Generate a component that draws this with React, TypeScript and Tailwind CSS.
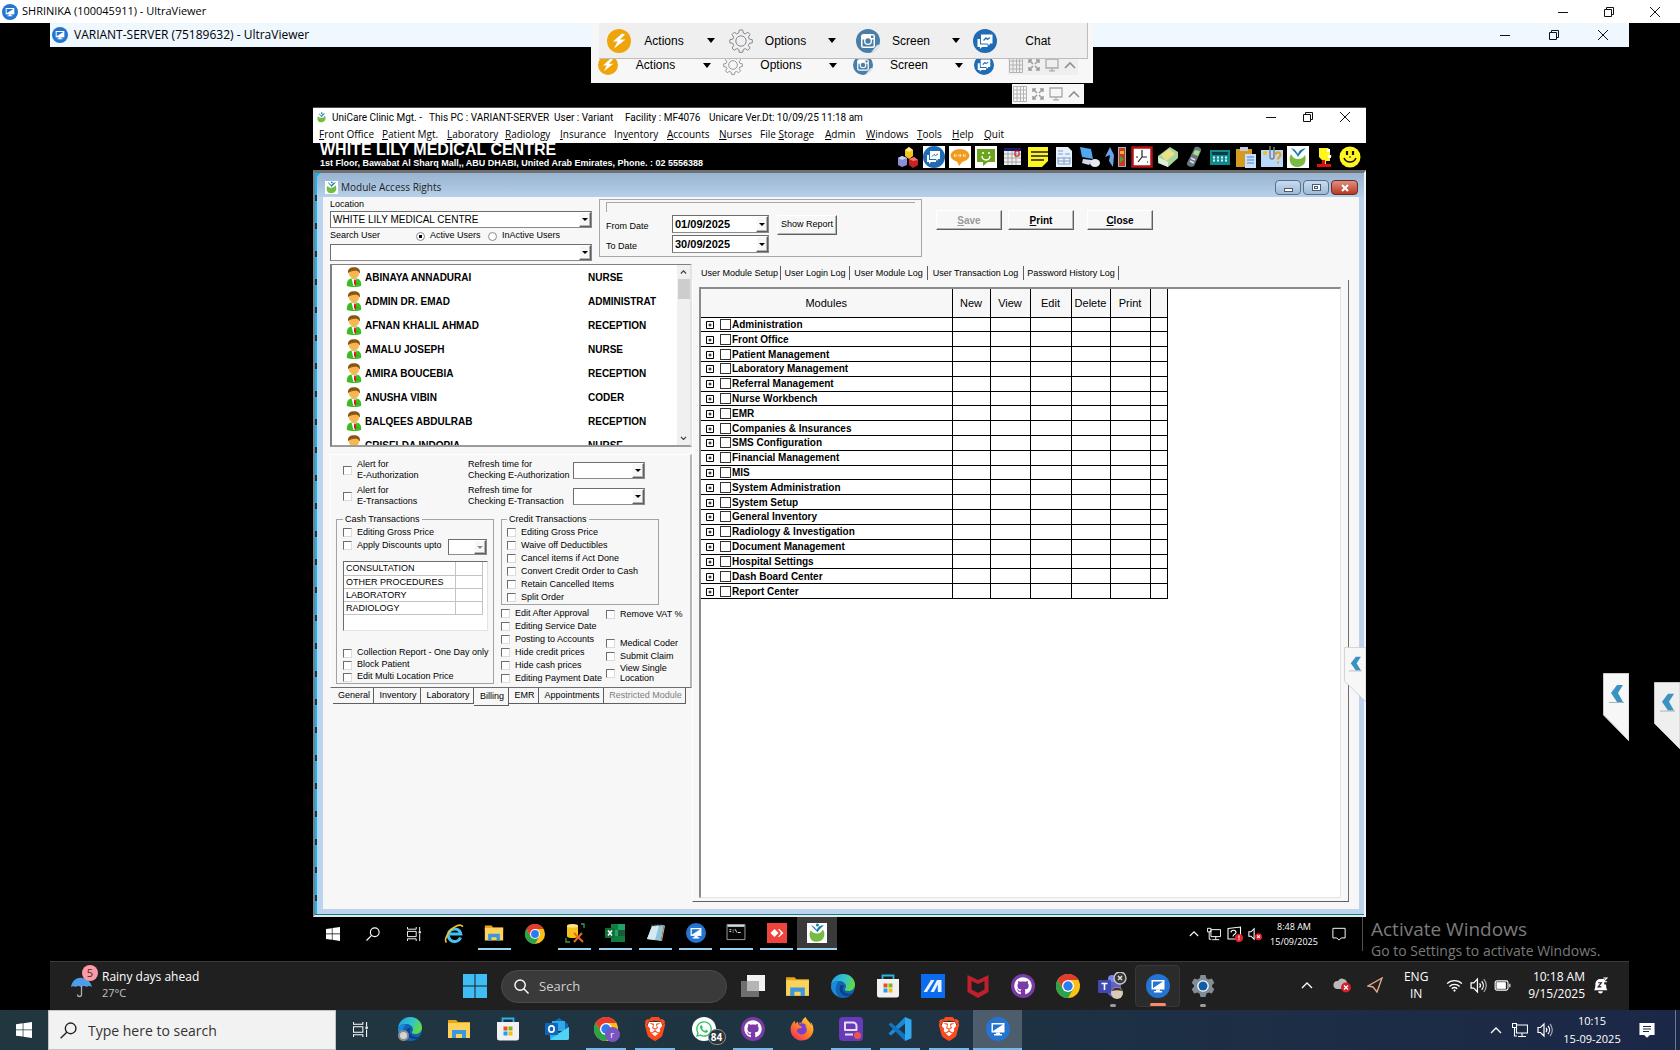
import React from "react";
import { FaGithub, FaWhatsapp, FaFirefoxBrowser } from "react-icons/fa";
import { SiBrave } from "react-icons/si";

/* ---------- fonts and shared class strings ---------- */

const SEGOE = "font-['Open_Sans','Noto_Sans',sans-serif]";
const ARIAL = "font-['Liberation_Sans',Arial,sans-serif]";

type IconProps = { className?: string };

/* ---------- brand and system icons ---------- */

const UltraIcon = ({ className = "size-6" }: IconProps) => (
  <svg viewBox="0 0 24 24" className={className} aria-hidden="true">
    <circle cx="12" cy="12" r="12" fill="#2474d2" />
    <path d="M5.500 6h13v9.500h-13z" fill="#fff" />
    <path d="M7 7.400h10L7 14z" fill="#2474d2" />
    <path d="M10 15.500h4v1.600h2v1.400H8v-1.400h2z" fill="#fff" />
  </svg>
);

const LeafIcon = ({ className = "size-4" }: IconProps) => (
  <svg viewBox="0 0 24 24" className={className} aria-hidden="true">
    <path d="M0 0h24v24H0z" fill="#fff" />
    <path d="M4.500 9C1.500 13 3 22.500 11 22.500c8 0 11-6 9.500-12-.5-1.500-1-2-1.500-2.500-2 3.500-4 4.500-7 4.500-3 0-5.500-1-7.500-3.500z" fill="#78bb43" />
    <path d="M5 2.500C8 4 9.500 5.500 11.500 8 13.500 4.500 16 3 20 2.500c-1.500 2.500-4.500 4-7.500 8.500C10 8 7 6 5 2.500z" fill="#157fa6" />
    <circle cx="12.500" cy="2.500" r="1.800" fill="#157fa6" />
  </svg>
);

const BoltIcon = ({ className = "size-6" }: IconProps) => (
  <svg viewBox="0 0 24 24" className={className} aria-hidden="true">
    <circle cx="12" cy="12" r="12" fill="#eea50b" />
    <path d="M15 4.500L6 12.500h4.500L7 19.500l11.500-9h-5.500L18 5.500z" fill="#fff" />
  </svg>
);

const GearOutline = ({ className = "size-6" }: IconProps) => (
  <svg viewBox="0 0 24 24" className={className} fill="none" stroke="#85878f" strokeWidth="1" aria-hidden="true">
    <path d="M10.300 1h3.400l.6 3 2 .9 2.600-1.700 2.200 2.300-1.700 2.500.9 2.100 3 .6v3.100l-3 .6-.9 2.100 1.700 2.500-2.300 2.300-2.500-1.700-2 .9-.6 2.800h-3.400l-.6-2.900-2-.8-2.600 1.700L3 19l1.700-2.500-.9-2.100-3-.6v-3.100l3-.6.9-2.100L3 5.500l2.300-2.300 2.500 1.700 1.900-.9z" />
    <circle cx="12" cy="12" r="5.200" />
  </svg>
);

const CameraIcon = ({ className = "size-6" }: IconProps) => (
  <svg viewBox="0 0 24 24" className={className} aria-hidden="true">
    <circle cx="12" cy="12" r="12" fill="#4a7ea6" />
    <path d="M21 16l-6 7.500c4.500-1 7.500-4 8.500-8z" fill="#fff" opacity=".8" />
    <rect x="5" y="5" width="14" height="14" rx="2.500" fill="#fff" />
    <path d="M6.500 10.500h2a4 4 0 0 0 7 0h2v6a1 1 0 0 1-1 1h-9a1 1 0 0 1-1-1z" fill="#4a7ea6" />
    <circle cx="12" cy="12" r="4" fill="#fff" />
    <circle cx="12" cy="12" r="2.700" fill="#4a7ea6" />
    <path d="M15 6.500h2.500V9H15z" fill="#4a7ea6" />
  </svg>
);

const ChatIcon = ({ className = "size-6" }: IconProps) => (
  <svg viewBox="0 0 24 24" className={className} aria-hidden="true">
    <circle cx="12" cy="12" r="12" fill="#1f6cb5" />
    <path d="M8 5.500h11.500v9H17l-1 2-1.500-2H8z" fill="#fff" />
    <path d="M4.500 10H7v5.500h7.500v2.500H9l-2 2v-2H4.500z" fill="#fff" />
    <path d="M10.500 11.500l2.500-2.500 1.500 1.300L17 8.500" stroke="#1f6cb5" strokeWidth="1.300" fill="none" />
  </svg>
);

const WinLogo = ({ className = "size-4" }: IconProps) => (
  <svg viewBox="0 0 16 16" className={className} fill="#fff" aria-hidden="true">
    <path d="M0 2.200l6.700-.9v6.200H0zM7.400 1.200L16 0v7.500H7.400zM0 8.300h6.700v6.300L0 13.700zM7.400 8.300H16V16l-8.600-1.300z" />
  </svg>
);

const Lens = ({ className = "size-4", color = "#fff" }: IconProps & { color?: string }) => (
  <svg viewBox="0 0 16 16" className={className} fill="none" stroke={color} strokeWidth="1.300" aria-hidden="true">
    <circle cx="10" cy="6" r="5" />
    <path d="M6.400 9.600L.6 15.400" />
  </svg>
);

const TaskView = ({ className = "size-4" }: IconProps) => (
  <svg viewBox="0 0 16 16" className={className} fill="none" stroke="#fff" strokeWidth="1.100" aria-hidden="true">
    <path d="M.5 0v2.500h10V0M.5 16v-2.500h10V16M.5 5h10v6H.500z" />
    <path d="M14.500 0v4.500M14.500 8v8" />
    <path d="M13.300 4.800h2.500v2.500h-2.500z" fill="#fff" stroke="none" />
  </svg>
);

const ChromeIcon = ({ className = "size-6" }: IconProps) => (
  <svg viewBox="0 0 24 24" className={className} aria-hidden="true">
    <circle cx="12" cy="12" r="12" fill="#fbc116" />
    <path d="M1.600 6A12 12 0 0 1 22.400 6H12L7 14.900z" fill="#e33b2e" />
    <path d="M1.600 6A12 12 0 0 0 12 24l5.200-9L12 12 6.800 15z" fill="#2ba24c" />
    <circle cx="12" cy="12" r="6" fill="#fff" />
    <circle cx="12" cy="12" r="4.700" fill="#2a7cf0" />
  </svg>
);

const EdgeIcon = ({ className = "size-6" }: IconProps) => (
  <svg viewBox="0 0 24 24" className={className} aria-hidden="true">
    <defs>
      <linearGradient id="edgeTop" x1="0" y1="0" x2="1" y2="0.400">
        <stop offset="0" stopColor="#1f9fe0" />
        <stop offset="0.600" stopColor="#34c3c9" />
        <stop offset="1" stopColor="#5fd84a" />
      </linearGradient>
    </defs>
    <circle cx="12" cy="12" r="12" fill="#1164b4" />
    <path d="M.1 11C1 4 6.500 0 12 0c7 0 12 5 12 10.500 0 4-3 6.500-6.500 6.500-2.500 0-4-1-3.500-2 .8-1 1-1.700 1-2.700C15 9 11.500 7 8 7S1 8.500.1 11z" fill="url(#edgeTop)" />
    <path d="M9 12.500c-1.500 5 2 9.500 7.500 9.500 2 0 4-1 5.500-2.500-2.500 1-8 .5-9.500-2.500C11 15 11.500 13.500 13 12c-1-1.500-3.500-1-4 .5z" fill="#0b3f8a" />
    <path d="M0 12c1-4 5-5 8-4.500-4 3-4.500 10-.5 14.800C3 20.500 0 17 0 12z" fill="#1b8bd8" />
  </svg>
);

const FolderIcon = ({ className = "size-6" }: IconProps) => (
  <svg viewBox="0 0 24 24" className={className} aria-hidden="true">
    <path d="M1 3h8l2 2h12v4H1z" fill="#e8a514" />
    <path d="M1 6h22v15H1z" fill="#fbd35c" />
    <path d="M5 13h14v8h-4v-4H9v4H5z" fill="#3a96dd" />
  </svg>
);

const StoreIcon = ({ className = "size-6" }: IconProps) => (
  <svg viewBox="0 0 24 24" className={className} aria-hidden="true">
    <path d="M6.500 6V1.500h11V6" fill="none" stroke="#2bb3e6" strokeWidth="1.800" />
    <path d="M1 5h22v16a2.500 2.500 0 0 1-2.500 2.500h-17A2.500 2.500 0 0 1 1 21z" fill="#f1f1f1" />
    <path d="M7.500 9.500h4v4h-4z" fill="#e8502a" />
    <path d="M12.500 9.500h4v4h-4z" fill="#7db916" />
    <path d="M7.500 14.500h4v4h-4z" fill="#1fa2e6" />
    <path d="M12.500 14.500h4v4h-4z" fill="#fbb713" />
  </svg>
);

const BraveIcon = ({ className = "size-6" }: IconProps) => (
  <span className={"relative inline-flex " + className}>
    <svg viewBox="0 0 24 24" className="absolute inset-0 size-full" aria-hidden="true">
      <path d="M6 5h12l2 5-3 9-5 3-5-3-3-9z" fill="#fff" />
    </svg>
    <SiBrave className="relative size-full text-[#fb4a1c]" />
  </span>
);

const GithubIcon = () => (
  <span className="grid size-6 place-items-center rounded-full bg-[#7b3aa5]">
    <FaGithub className="size-[18px] text-white" />
  </span>
);

const WhatsappIcon = () => (
  <span className="relative grid size-6 place-items-center rounded-full bg-white">
    <FaWhatsapp className="size-[18px] text-[#28c15c]" />
    <span className={"absolute top-3 left-4 grid h-[16px] w-[18px] place-items-center rounded-full border border-[#8a9498] bg-[#2b3538] text-[10px] font-bold text-white " + SEGOE}>84</span>
  </span>
);

const FirefoxIcon = () => (
  <span className="relative grid size-6 place-items-center">
    <span className="absolute size-[14px] rounded-full bg-[#7a3fd0]" />
    <svg className="absolute size-0" aria-hidden="true">
      <defs>
        <linearGradient id="fox" x1="1" y1="0" x2="0.200" y2="1">
          <stop offset="0" stopColor="#ffe14a" />
          <stop offset="0.500" stopColor="#ff8a1f" />
          <stop offset="1" stopColor="#f2305a" />
        </linearGradient>
      </defs>
    </svg>
    <FaFirefoxBrowser className="relative size-6 fill-[url(#fox)]" />
  </span>
);

const OutlookIcon = () => (
  <svg viewBox="0 0 24 24" className="size-6" aria-hidden="true">
    <path d="M5 7l9-6 9 6v5H5z" fill="#1066b5" />
    <path d="M7 4h13v10H7z" fill="#32a9e7" />
    <path d="M5 10l9 6 10-6v11a2 2 0 0 1-2 2H7a2 2 0 0 1-2-2z" fill="#26b0ef" />
    <path d="M24 10L5 22.500A2 2 0 0 0 7 23h15a2 2 0 0 0 2-2z" fill="#50d3f7" />
    <rect x="0" y="6" width="13" height="12" rx="1" fill="#0f64c0" />
    <ellipse cx="6.500" cy="12" rx="2.700" ry="3.100" fill="none" stroke="#fff" strokeWidth="1.600" />
  </svg>
);

const VsCodeIcon = () => (
  <svg viewBox="0 0 24 24" className="size-6" aria-hidden="true">
    <path d="M17 0l6.500 2.800v18.400L17 24z" fill="#2fa8ef" />
    <path d="M17 0v6.500L3 18.500.5 16.500z" fill="#1a8ad6" />
    <path d="M17 24v-6.500L3 5.500.5 7.500z" fill="#0f75c0" />
  </svg>
);

const PurpleIcon = () => (
  <svg viewBox="0 0 24 24" className="size-6" aria-hidden="true">
    <rect width="24" height="24" rx="4" fill="#673ab7" />
    <path d="M6 5.500h8a3.500 3.500 0 0 1 3.500 3.500v4H6zM6 17.500h8" fill="none" stroke="#e6dcf5" strokeWidth="2" strokeLinejoin="round" />
    <circle cx="18.500" cy="18.500" r="3.500" fill="#f0524f" />
  </svg>
);

const IeIcon = () => (
  <svg viewBox="0 0 20 20" className="size-5" fill="none" aria-hidden="true">
    <path d="M16.500 13.500A6.300 6.300 0 1 1 16.800 10H6" stroke="#45c1f2" strokeWidth="3" />
    <path d="M2.500 18.500C-.5 16 5 5.500 11.500 2.500 15 .8 18.500.5 18.500 3" stroke="#f3c522" strokeWidth="1.600" />
  </svg>
);

const SqlIcon = () => (
  <svg viewBox="0 0 20 20" className="size-5" aria-hidden="true">
    <path d="M2 2.500C4 .5 11 .5 13 2.500v11c-2 2-9 2-11 0z" fill="#f6c11d" />
    <ellipse cx="7.500" cy="3" rx="5.500" ry="1.700" fill="#fde28a" />
    <path d="M16 1h3v4M1 15v4h4" stroke="#3c9a4a" strokeWidth="1.300" fill="none" />
    <path d="M9 10l9 9M17 10l-8 9" stroke="#e46a1c" strokeWidth="2" />
  </svg>
);

const ExcelIcon = () => (
  <svg viewBox="0 0 20 20" className="size-5" aria-hidden="true">
    <path d="M6 1h14v18H6z" fill="#21a366" />
    <path d="M6 1h7v6H6zM6 13h14v6H6z" fill="#107c41" />
    <path d="M13 7h7v6h-7z" fill="#185c37" />
    <rect y="5" width="10" height="10" rx="1" fill="#0f7038" />
    <path d="M3 7.500l4 5M7 7.500l-4 5" stroke="#fff" strokeWidth="1.500" />
  </svg>
);

const NotepadIcon = () => (
  <svg viewBox="0 0 20 20" className="size-5" aria-hidden="true">
    <path d="M6 3l12-1-3 16-14-2z" fill="#8fc3d6" />
    <path d="M6 3l7-.5-4 14.500-8-1z" fill="#d5eaf0" />
    <path d="M18 2l1 1-3 15-1 0z" fill="#d7a264" />
    <path d="M6 1.500v2M9 1.500v2M12 1v2M15 1v2" stroke="#67818b" strokeWidth=".8" />
  </svg>
);

const CmdIcon = () => (
  <svg viewBox="0 0 20 18" className="h-[17px] w-5" aria-hidden="true">
    <path d="M.5.500h19v16H.500z" fill="#060606" stroke="#9da2a6" />
    <path d="M1 1h18v2H1z" fill="#d9dcdf" />
    <path d="M3 6h2M3 8h2M7 6v1M7 8v1M9 5.500l2 3.500M12 9h3" stroke="#e8e8e8" strokeWidth="1" />
  </svg>
);

const AnyDeskIcon = () => (
  <svg viewBox="0 0 20 20" className="size-5" aria-hidden="true">
    <path d="M0 0h20v20H0z" fill="#ef443b" />
    <path d="M7.500 6l4 4-4 4-4-4zM11 6l1.200 0 4.300 4-4.300 4H11l3-4z" fill="#fff" />
  </svg>
);

const MIcon = () => (
  <svg viewBox="0 0 24 24" className="size-6" aria-hidden="true">
    <path d="M0 0h24v24H0z" fill="#0b6cf0" />
    <path d="M2.500 18L10 6h3.500L6 18zM9.500 18L16 6h4.500v12h-3.700v-7.500L13 18z" fill="#e8f2ff" />
  </svg>
);

const McAfeeIcon = () => (
  <svg viewBox="0 0 24 24" className="size-6" aria-hidden="true">
    <path d="M1.500 1L12 6l10.500-5v17L12 24 1.500 18zm4 6v8.500L12 19l6.500-3.500V7L12 10z" fill="#c01f2e" />
  </svg>
);

const TeamsIcon = () => (
  <svg viewBox="0 0 30 28" className="h-7 w-[30px]" aria-hidden="true">
    <circle cx="14" cy="7" r="4" fill="#7b83eb" />
    <path d="M8 10h15v8a7 7 0 0 1-14 0z" fill="#5b62c9" />
    <rect y="8" width="13" height="13" rx="1" fill="#4049b0" />
    <path d="M3.500 11.500h6M6.500 11.500v6.500" stroke="#fff" strokeWidth="1.600" />
    <circle cx="22" cy="6" r="6" fill="#3a3a3a" stroke="#c7c7c7" strokeWidth="1.400" />
    <path d="M20 4l4 4M24 4l-4 4" stroke="#e6e6e6" strokeWidth="1.400" />
    <circle cx="19" cy="21" r="6" fill="#d8cbb9" />
    <path d="M13.500 19a6 6 0 0 1 11 0c-4-1-7-1-11 0z" fill="#4a2e24" />
  </svg>
);

const SettingsIcon = () => (
  <svg viewBox="0 0 24 24" className="size-6" aria-hidden="true">
    <path d="M9.500 1h5l.8 3.300 2.200 1.200 3.300-1 2.500 4.300L21 11.200v1.600l2.300 2.400-2.500 4.300-3.300-1-2.200 1.200-.8 3.300h-5l-.8-3.300-2.200-1.200-3.300 1L.7 15.200 3 12.800v-1.600L.7 8.800l2.500-4.300 3.300 1 2.200-1.200z" fill="#848d96" />
    <circle cx="12" cy="12" r="5.800" fill="#fff" />
    <circle cx="12" cy="12" r="4.500" fill="#0f5ca8" />
  </svg>
);

const TaskSquares = () => (
  <svg viewBox="0 0 24 24" className="size-6" aria-hidden="true">
    <path d="M6 1h18v16H6z" fill="#f2f2f2" />
    <path d="M0 7h18v16H0z" fill="#6f6f6f" />
    <path d="M6 7h12v10H6z" fill="#b5b5b5" />
  </svg>
);

const Win11Logo = () => (
  <svg viewBox="0 0 24 24" className="size-6" aria-hidden="true">
    <path d="M0 0h11.500v11.500H0zM12.500 0H24v11.500H12.500zM0 12.500h11.500V24H0zM12.500 12.500H24V24H12.500z" fill="#3fbdf5" />
  </svg>
);

const Umbrella = () => (
  <svg viewBox="0 0 24 24" className="size-6" aria-hidden="true">
    <path d="M1 13C2 6 8 3 12 4c5 0 9 4 10 9-2-1.500-4-1.500-5 0-2-1.500-4-1.500-6 0-2-1.500-4-1.500-5 0-1.500-1-3.500-1-5 0z" fill="#4e9de8" />
    <path d="M11.500 12v8.500a2 2 0 0 1-4 0" fill="none" stroke="#a9adb1" strokeWidth="1.300" />
  </svg>
);

/* ---------- tray glyphs ---------- */

const TrayUp = ({ className = "w-3" }: IconProps) => (
  <svg viewBox="0 0 12 7" className={className} fill="none" stroke="#fff" strokeWidth="1.300" aria-hidden="true">
    <path d="M1 6l5-5 5 5" />
  </svg>
);

const TrayNet = ({ className = "size-4" }: IconProps) => (
  <svg viewBox="0 0 16 16" className={className} fill="none" stroke="#fff" strokeWidth="1.100" aria-hidden="true">
    <path d="M4.500 3h11v8h-11zM10 11v3M6 14.500h8M.5 1.500h4v4h-4zM2.500 5.500V14H5" />
  </svg>
);

const TraySpeaker = ({ className = "size-4", muted = false }: IconProps & { muted?: boolean }) => (
  <svg viewBox="0 0 16 16" className={className} fill="none" stroke="#fff" strokeWidth="1.200" aria-hidden="true">
    <path d="M1 5.500h2.500L7 2v12l-3.500-3.500H1z" />
    {muted ? (
      <>
        <circle cx="12" cy="11" r="4" fill="#e5202a" stroke="none" />
        <path d="M10.500 9.500l3 3M13.500 9.500l-3 3" />
      </>
    ) : (
      <>
        <path d="M9 6a3 3 0 0 1 0 4M11 4a6 6 0 0 1 0 8" />
        <path d="M13 2a9 9 0 0 1 0 12" opacity=".6" />
      </>
    )}
  </svg>
);

const TrayKey = () => (
  <svg viewBox="0 0 16 16" className="size-4" fill="none" stroke="#fff" strokeWidth="1.100" aria-hidden="true">
    <path d="M1 2.500L13.500 1v12H1zM4 6.500c0-3 5-3 5 0 0 2-3 1.500-3 4" />
    <circle cx="12" cy="12" r="4" fill="#e5202a" stroke="none" />
    <path d="M12 9.500v3M12 13.300v1" />
  </svg>
);

const TrayNote = ({ className = "size-4", filled = false }: IconProps & { filled?: boolean }) => (
  <svg viewBox="0 0 16 16" className={className} fill={filled ? "#fff" : "none"} stroke="#fff" strokeWidth="1.100" aria-hidden="true">
    <path d="M1 1.500h14v11h-4.500l-2.500 2.500-2.500-2.500H1z" />
    {filled && <path d="M4 4.500h8M4 7h8M4 9.500h6" stroke="#1b2a45" />}
  </svg>
);

/* ---------- caption buttons ---------- */

function Caption({ className }: { className: string }) {
  return (
    <div className={"mr-0.5 flex items-center " + className}>
      <button type="button" aria-label="Minimize" className="grid flex-1 place-items-center">
        <svg viewBox="0 0 10 10" className="size-[10px]" stroke="#111"><path d="M0 5.500h10" /></svg>
      </button>
      <button type="button" aria-label="Restore" className="grid flex-1 place-items-center">
        <svg viewBox="0 0 10 10" className="size-[10px]" stroke="#111" fill="none"><path d="M.5 2.500h7v7h-7zM2.500 2.500v-2h7v7h-2" /></svg>
      </button>
      <button type="button" aria-label="Close window" className="grid flex-1 place-items-center">
        <svg viewBox="0 0 10 10" className="size-[10px]" stroke="#111" fill="none"><path d="M0 0l10 10M10 0L0 10" /></svg>
      </button>
    </div>
  );
}

/* ---------- floating remote toolbars ---------- */

const Caret = () => (
  <svg viewBox="0 0 8 5" className="h-[5px] w-2 shrink-0" aria-hidden="true"><path d="M0 0h8L4 5z" fill="#000" /></svg>
);

function ToolItem({ icon, label, caret = true, className }: { icon: React.ReactNode; label: string; caret?: boolean; className: string }) {
  return (
    <button type="button" aria-label={label} className={"flex items-center text-black " + className}>
      {icon}
      {caret ? (
        <>
          <span className="flex-1 pr-[10px] text-center">{label}</span>
          <Caret />
        </>
      ) : (
        <span className="flex-1 text-center">{label}</span>
      )}
    </button>
  );
}

const miniIcons: [string, React.ReactNode][] = [
  ["Keyboard", <svg key="g" viewBox="0 0 14 16" className="h-4 w-[14px]" fill="none" stroke="#b3b3b3"><path d="M.5.500h13v15H.500zM4 0v16M7.500 0v16M10.500 0v16M0 4h14M0 8h14M0 12h14" /></svg>],
  ["Full size", <svg key="x" viewBox="0 0 12 12" className="size-3" fill="none" stroke="#9b9b9b" strokeWidth="1.500"><path d="M1 4V1h3M1 1l4 4M8 1h3v3M11 1L7 5M1 8v3h3M1 11l4-4M8 11h3V8M11 11L7 7" /></svg>],
  ["Display", <svg key="m" viewBox="0 0 14 14" className="size-[14px]" fill="none" stroke="#a9a9a9" strokeWidth="1.300"><path d="M1 1h12v9H1zM4 12.800h6M7 10v3" /></svg>],
  ["Collapse", <svg key="c" viewBox="0 0 12 7" className="w-3" fill="none" stroke="#8f8f8f" strokeWidth="1.700"><path d="M1 6l5-5 5 5" /></svg>],
];

function MiniBar({ className }: { className: string }) {
  return (
    <div className={"flex items-center gap-[5px] pl-px " + className}>
      {miniIcons.map(([label, icon]) => (
        <button key={label} type="button" aria-label={label}>{icon}</button>
      ))}
    </div>
  );
}

function FloatingToolbars() {
  return (
    <div className={"text-[12px] " + ARIAL}>
      <div className="absolute top-6 left-[591px] flex h-[59px] w-[502px] items-end bg-[#f7f7f7] pb-2 pl-[7px]">
        <ToolItem icon={<BoltIcon className="size-5" />} label="Actions" className="h-5 w-[113px]" />
        <ToolItem icon={<GearOutline className="size-5" />} label="Options" className="ml-3 h-5 w-[114px]" />
        <ToolItem icon={<CameraIcon className="size-5" />} label="Screen" className="ml-4 h-5 w-[110px]" />
        <button type="button" aria-label="Chat" className="ml-[11px]"><ChatIcon className="size-5" /></button>
        <MiniBar className="ml-[14px] h-5 w-[70px] bg-[#efefef]" />
      </div>
      <div className="absolute top-[23px] left-[599px] flex h-9 w-[489px] items-center border-r border-b border-[#bdbdbd] bg-[#efefef] pl-2">
        <ToolItem icon={<BoltIcon />} label="Actions" className="w-[108px]" />
        <ToolItem icon={<GearOutline />} label="Options" className="ml-[14px] w-[107px]" />
        <ToolItem icon={<CameraIcon />} label="Screen" className="ml-5 w-[104px]" />
        <ToolItem icon={<ChatIcon />} label="Chat" caret={false} className="ml-[13px] w-[106px]" />
      </div>
      <MiniBar className="absolute top-[84px] left-[1012px] h-5 w-[72px] bg-[#f7f7f7]" />
    </div>
  );
}

/* ---------- side flag ---------- */

function SideFlag({ className, fill }: { className: string; fill: string }) {
  return (
    <button type="button" aria-label="Show panel" className={"absolute right-0 " + className}>
      <svg viewBox="0 0 26 68" preserveAspectRatio="none" className="size-full" aria-hidden="true">
        <path d="M.5.500H26V68L.5 42z" fill={fill} stroke="#c9c9c9" />
        <path d="M14 12h6l-5 8 5 9h-6l-6-9z" fill="#3b93c2" />
        <path d="M6 29.500h15" stroke="#a8b3b8" />
      </svg>
    </button>
  );
}

/* ---------- application toolbar icons ---------- */

const appTools: [string, React.ReactNode][] = [
  ["Modules", <g key="1"><path d="M8 4l4-3 4 3v6l-4 3-4-3z" fill="#f5c21b" /><path d="M1 12l4-2 5 2v7l-5 2-4-2z" fill="#8a8fd8" /><path d="M12 13l5-2 4 3v5l-5 3-4-3z" fill="#c92020" /><path d="M8 4l4 2 4-2-4-3z" fill="#fdea8a" /><path d="M1 12l4 2 5-2-5-2z" fill="#c9ccf5" /><path d="M12 13l4 2 5-1-4-3z" fill="#f07a6a" /></g>],
  ["Chat", <g key="2"><path d="M0 0h22v22H0z" fill="#fff" /><circle cx="11" cy="11" r="11" fill="#1f6cb5" /><path d="M7 5h10v8h-2l-1 2-1-2H7zM4 9h2v5h7v2H8l-2 2v-2H4z" fill="#fff" /><path d="M9 10.500l2-2 1.500 1L15 8" stroke="#1f6cb5" fill="none" /></g>],
  ["SMS", <g key="3"><path d="M0 0h22v22H0z" fill="#fff" /><ellipse cx="11" cy="9.500" rx="9.500" ry="6.500" fill="#f09b1e" /><path d="M8 15h6l-4 5z" fill="#f09b1e" /><path d="M5 9.500h3M9.500 9.500h3M14 9.500h3" stroke="#fff0c8" strokeWidth="2.500" strokeDasharray="1 .6" fill="none" /></g>],
  ["Message", <g key="4"><path d="M0 0h22v22H0z" fill="#fff" /><path d="M2 3h18v13h-7l-5 4v-4H2z" fill="#6ba51f" /><path d="M7 10a4 4 0 0 0 8 0M8 6v2M14 6v2" stroke="#fff" strokeWidth="1.500" fill="none" /></g>],
  ["Calendar", <g key="5"><path d="M3 3h17v16H3z" fill="#eee" /><path d="M3 2h17v3H3z" fill="#1b1b6b" /><path d="M3 8h17M3 12h17M3 16h17M7 5v14M11 5v14M15 5v14" stroke="#a5a5a5" /><path d="M14 5h4v5h-4z" fill="none" stroke="#c00" /></g>],
  ["Notes", <g key="6"><path d="M1 1h20v14l-6 6H1z" fill="#fff51f" /><path d="M4 6h17M4 10h17M4 14h13" stroke="#222" strokeWidth="1.300" /></g>],
  ["Document", <g key="7"><path d="M3 1h12l4 4v16H3z" fill="#e9f1fa" /><path d="M5 5h5M5 8h5M12 8h5M5 12h12M5 15h12M5 18h12M5 11v7M11 11v7M17 11v7" stroke="#7a9cc9" /></g>],
  ["Computer", <g key="8"><path d="M1 1l11 2 2 10-11-2z" fill="#4fa8f0" /><path d="M4 13l9 1-3 5-7-2z" fill="#d3dbe6" /><ellipse cx="16" cy="17" rx="5" ry="4" fill="#e7eaf0" /></g>],
  ["Transfer", <g key="9"><path d="M0 11L5 1l4 8-1 12-4-6 1-6z" fill="#6aa3e6" /><path d="M13 1h8v20h-8z" fill="#a3b1c6" /><path d="M14 2h6v18h-6z" fill="#d0371c" /><path d="M15 5h4v3h-4z" fill="#e5b33a" /><path d="M15 10l4 3-4 4z" fill="#4aa33c" /></g>],
  ["Clock", <g key="10"><path d="M1.500 1.500h19v19h-19z" fill="#fff" stroke="#b31217" strokeWidth="2.500" /><path d="M11 4v7l5 0M11 11l-4 5M5 11h2M16 16h1" stroke="#222" strokeWidth="1.200" fill="none" /></g>],
  ["Cash", <g key="11"><path d="M1 10L13 1l8 5v6L11 21l-10-4z" fill="#a8d39a" /><path d="M4 9l8-6 6 5-9 7z" fill="#eadf8b" /><path d="M1 11l10 5v5L2 17z" fill="#dfeedb" /></g>],
  ["Phone", <g key="12"><path d="M12 1c3-1 7 1 6 4l-7 15c-2 2-8 0-7-3z" fill="#6c7681" /><path d="M12 4l5 1-2 5-5-2z" fill="#a8e087" /><path d="M8 12l4 2M7 15l4 2" stroke="#dfe5e9" strokeWidth="1.500" /></g>],
  ["Calculator", <g key="13"><path d="M1 4h20v15H1z" fill="#0f8a8f" /><path d="M3 6h16v3H3z" fill="#073c40" /><path d="M4 11.500h2M8 11.500h2M12 11.500h2M16 11.500h2M4 14.500h2M8 14.500h2M12 14.500h2M16 14.500h2" stroke="#d2f3f3" strokeWidth="2" /></g>],
  ["Clipboard", <g key="14"><path d="M1 3h16v18H1z" fill="#d59a1f" /><path d="M5 1h8v4H5z" fill="#c7ccd3" /><path d="M10 8h11v14H10z" fill="#c9dffb" /><path d="M12 11h7M12 14h7M12 17h7" stroke="#4f86cf" /></g>],
  ["Help card", <g key="15"><path d="M0 4h22v17H0z" fill="#b9d9fa" /><path d="M9 0v11a2 2 0 0 0 4 0V1" fill="none" stroke="#7b8088" strokeWidth="1.500" /><path d="M14.500 9c0-4 5-3 5 0 0 2-2.500 2-2.500 4.500M17 15.500v2" stroke="#e5a018" strokeWidth="2" fill="none" /><circle cx="4" cy="7" r="2" fill="#f0c020" /></g>],
  ["Home", <g key="16"><path d="M0 0h22v22H0z" fill="#fff" /><path d="M4 8c-3 5-1 13 6 13s10-5 8-12c-2 3-4 4-7 4s-6-2-7-5z" fill="#78bb43" /><path d="M4 2c4 1 5 3 7 6 1-4 4-5 8-6-3 3-5 4-8 9-2-4-4-5-7-9z" fill="#157fa6" /></g>],
  ["User", <g key="17"><path d="M6 2h9l2 2v5l2 1-2 1v4h-4v4h-4v-5L6 11z" fill="#fff51f" /><path d="M4 18h14v3H4zM9 14h3v5H9z" fill="#e01010" /><path d="M14 3h3v3h-3zM15 9h3v3h-3z" fill="#fff" /></g>],
  ["Smile", <g key="18"><circle cx="11" cy="11" r="10.500" fill="#fff51f" /><path d="M5 12a6.500 6.500 0 0 0 12 0" stroke="#111" strokeWidth="1.500" fill="none" /><path d="M8 5v4M14 5v4" stroke="#111" strokeWidth="2.200" /><path d="M10 11h2" stroke="#111" /></g>],
];

/* ---------- classic form controls ---------- */

const sunken = "border border-t-[#6d6d6d] border-l-[#6d6d6d] border-r-[#8b8b8b] border-b-[#8b8b8b] bg-white";
const raised = "border border-t-white border-l-white border-r-[#5f5f5f] border-b-[#5f5f5f] bg-[#f7f7f7] shadow-[inset_-1px_-1px_0_#b5b5b5]";

function Combo({ label, value = "", className = "", disabled = false }: { label: string; value?: string; className?: string; disabled?: boolean }) {
  return (
    <div className={"flex items-stretch " + sunken + " " + className}>
      <select aria-label={label} disabled={disabled} defaultValue={value} className="min-w-0 flex-1 appearance-none bg-white pl-0.5 leading-none text-black outline-none">
        <option value={value}>{value}</option>
      </select>
      <span className={"pointer-events-none grid w-3 shrink-0 place-items-center " + raised}>
        <svg viewBox="0 0 8 4" className="h-[3px] w-[6px]" aria-hidden="true"><path d="M0 0h8L4 4z" fill={disabled ? "#8a8a8a" : "#000"} /></svg>
      </span>
    </div>
  );
}

function Check({ label, className = "" }: { label: React.ReactNode; className?: string }) {
  return (
    <label className={"flex items-center gap-[5px] whitespace-nowrap " + className}>
      <input type="checkbox" className="size-[9px] shrink-0 appearance-none border border-t-[#6d6d6d] border-r-[#dcdcdc] border-b-[#dcdcdc] border-l-[#6d6d6d] bg-white" />
      <span>{label}</span>
    </label>
  );
}

const UserIcon = () => (
  <svg viewBox="0 0 16 20" className="h-5 w-4 shrink-0" aria-hidden="true">
    <path d="M1 19c-1-5 2-8 7-8s8 3 7 8c-4 1.300-10 1.300-14 0z" fill="#3ebd22" />
    <path d="M5.500 11.500h5L8.500 19h-1z" fill="#fff" />
    <path d="M8 12.500h1.600l.8 4.500-1 1.500L8 17z" fill="#e0141b" />
    <circle cx="8" cy="6.500" r="5" fill="#fbb54d" />
    <path d="M2 6.500C1.500 2 4 .3 8 .3s6.500 1.700 6 6.200C12.500 5 12 3.800 10 3.800S4 4 2 6.500z" fill="#8a5716" />
  </svg>
);

const users: [string, string][] = [
  ["ABINAYA ANNADURAI", "NURSE"],
  ["ADMIN DR. EMAD", "ADMINISTRAT"],
  ["AFNAN KHALIL AHMAD", "RECEPTION"],
  ["AMALU JOSEPH", "NURSE"],
  ["AMIRA BOUCEBIA", "RECEPTION"],
  ["ANUSHA VIBIN", "CODER"],
  ["BALQEES ABDULRAB", "RECEPTION"],
  ["CRISELDA INDOPIA", "NURSE"],
];

function UserList() {
  return (
    <div className="flex h-[183px] border-t border-r-2 border-b-2 border-l-2 border-[#808080] border-r-[#e3e3e3] border-b-[#9b9b9b] bg-white">
      <ul className="flex-1 overflow-hidden text-[10px] font-bold text-black">
        {users.map(([name, role]) => (
          <li key={name} className="flex h-6 items-center pl-[14px]">
            <UserIcon />
            <span className="w-[226px] shrink-0 pl-[3px]">{name}</span>
            <span className="w-[84px]">{role}</span>
          </li>
        ))}
      </ul>
      <div className="flex w-[13px] flex-col items-center bg-[#f0f0f0]">
        <button type="button" aria-label="Scroll up" className="grid h-[14px] place-items-center">
          <svg viewBox="0 0 8 5" className="w-[7px]" fill="none" stroke="#444" strokeWidth="1.400"><path d="M1 4l3-3 3 3" /></svg>
        </button>
        <div className="h-5 w-3 bg-[#cdcdcd]" />
        <button type="button" aria-label="Scroll down" className="mt-auto grid h-[14px] place-items-center">
          <svg viewBox="0 0 8 5" className="w-[7px]" fill="none" stroke="#444" strokeWidth="1.400"><path d="M1 1l3 3 3-3" /></svg>
        </button>
      </div>
    </div>
  );
}

const creditChecks = ["Editing Gross Price", "Waive off Deductibles", "Cancel items if Act Done", "Convert Credit Order to Cash", "Retain Cancelled Items", "Split Order"];
const approvalChecks = ["Edit After Approval", "Editing Service Date", "Posting to Accounts", "Hide credit prices", "Hide cash prices", "Editing Payment Date"];
const discountRows = ["CONSULTATION", "OTHER PROCEDURES", "LABORATORY", "RADIOLOGY"];

function BillingPanel() {
  return (
    <div className="mt-[7px] h-[234px] border-t border-r-2 border-b border-l border-t-white border-r-[#b5b5b5] border-b-[#6d6d6d] border-l-white px-[5px] pt-0.5">
      <div className="flex h-[26px] items-center pl-[7px]">
        <Check className="w-[125px] leading-[11px]" label={<>Alert for<br />E-Authorization</>} />
        <span className="w-[105px] leading-[11px]">Refresh time for<br />Checking E-Authorization</span>
        <Combo label="Refresh time for checking E-Authorization" className="h-[17px] w-[72px]" />
      </div>
      <div className="flex h-[26px] items-center pl-[7px]">
        <Check className="w-[125px] leading-[11px]" label={<>Alert for<br />E-Transactions</>} />
        <span className="w-[105px] leading-[11px]">Refresh time for<br />Checking E-Transaction</span>
        <Combo label="Refresh time for checking E-Transaction" className="h-[17px] w-[72px]" />
      </div>
      <div className="mt-1 flex items-start">
        <fieldset className="h-[171px] w-[158px] border border-[#a3a3a3] pl-[6px]">
          <legend className="px-0.5 leading-3">Cash Transactions</legend>
          <div className="pt-px">
            <Check className="h-[13px]" label="Editing Gross Price" />
            <div className="flex h-[17px] items-start">
              <Check className="h-[13px] w-[105px]" label="Apply Discounts upto" />
              <Combo label="Discount limit" disabled className="h-[16px] w-[39px]" />
            </div>
          </div>
          <div className="mt-[5px] h-[70px] w-[145px] border border-[#6d6d6d] border-r-[#e3e3e3] border-b-[#e3e3e3] bg-white">
            <table className="border-collapse">
              <tbody>
                {discountRows.map((r) => (
                  <tr key={r} className="h-[13px]">
                    <td className="w-[111px] border-r border-b border-[#c4c4c4] py-0 pr-0 pl-0.5 leading-3">{r}</td>
                    <td className="w-[27px] border-r border-b border-[#c4c4c4] p-0" />
                  </tr>
                ))}
              </tbody>
            </table>
          </div>
          <div className="mt-4">
            <Check className="h-3" label="Collection Report - One Day only" />
            <Check className="h-3" label="Block Patient" />
            <Check className="h-3" label="Edit Multi Location Price" />
          </div>
        </fieldset>
        <div className="ml-[7px] flex-1">
          <fieldset className="h-[92px] w-[158px] border border-[#a3a3a3] pl-[5px]">
            <legend className="px-0.5 leading-3">Credit Transactions</legend>
            <div className="pt-px">
              {creditChecks.map((c) => <Check key={c} className="h-[13px]" label={c} />)}
            </div>
          </fieldset>
          <div className="flex pt-0.5">
            <div className="w-[105px]">
              {approvalChecks.map((c) => <Check key={c} className="h-[13px]" label={c} />)}
            </div>
            <div className="pt-px">
              <Check className="h-[13px]" label="Remove VAT %" />
              <Check className="mt-4 h-[13px]" label="Medical Coder" />
              <Check className="h-[13px]" label="Submit Claim" />
              <Check className="leading-[10px]" label={<>View Single<br />Location</>} />
            </div>
          </div>
        </div>
      </div>
    </div>
  );
}

const bottomTabs: [string, string][] = [
  ["General", "w-[41px]"],
  ["Inventory", "w-[47px]"],
  ["Laboratory", "w-[53px]"],
  ["Billing", "w-[35px]"],
  ["EMR", "w-[30px]"],
  ["Appointments", "w-[65px]"],
  ["Restricted Module", "w-[82px]"],
];

function BottomTabs() {
  return (
    <div role="tablist" className="flex items-start pl-[3px]">
      {bottomTabs.map(([t, w]) => (
        <button
          key={t}
          type="button"
          role="tab"
          aria-selected={t === "Billing"}
          className={
            "border-r border-b border-[#5f5f5f] pl-0.5 text-center leading-none whitespace-nowrap " + w + " " +
            (t === "Billing" ? "h-[18px]" : "h-4") + (t === "Restricted Module" ? " text-[#7d7d7d]" : "")
          }
        >
          {t}
        </button>
      ))}
    </div>
  );
}

const logTabs: [string, string][] = [
  ["User Module Setup", "w-[82px]"],
  ["User Login Log", "w-[69px]"],
  ["User Module Log", "w-[78px]"],
  ["User Transaction Log", "w-[96px]"],
  ["Password History Log", "w-[95px]"],
];

const modules = [
  "Administration", "Front Office", "Patient Management", "Laboratory Management", "Referral Management",
  "Nurse Workbench", "EMR", "Companies & Insurances", "SMS Configuration", "Financial Management", "MIS",
  "System Administration", "System Setup", "General Inventory", "Radiology & Investigation",
  "Document Management", "Hospital Settings", "Dash Board Center", "Report Center",
];

const columns: [string, string][] = [
  ["New", "w-[38px]"], ["View", "w-[40px]"], ["Edit", "w-[41px]"], ["Delete", "w-[39px]"], ["Print", "w-[40px]"], ["", "w-[17px]"],
];

function ModulesTable() {
  return (
    <table className="h-[310px] w-[466px] table-fixed border-collapse">
      <thead>
        <tr className="h-[28px] bg-[#f7f7f7] text-[11px]">
          <th className="w-[251px] border-r border-b border-black p-0 font-normal">Modules</th>
          {columns.map(([c, w]) => (
            <th key={c} className={"border-r border-b border-black p-0 font-normal " + w}>{c}</th>
          ))}
        </tr>
      </thead>
      <tbody className="text-[10px] font-bold">
        {modules.map((m) => (
          <tr key={m}>
            <td className="border-r border-b border-black p-0">
              <div className="flex h-[13px] items-center pl-[5px]">
                <button type="button" aria-label={"Expand " + m} className="shrink-0">
                  <svg viewBox="0 0 9 9" className="size-[9px]" fill="none" stroke="#000"><path d="M.5 1.500h7v7h-7zM2.500 5h3M4 3.500v3" /></svg>
                </button>
                <label className="flex items-center gap-px whitespace-nowrap">
                  <input type="checkbox" className="ml-[5px] size-[11px] shrink-0 appearance-none border border-[#333] bg-white" />
                  {m}
                </label>
              </div>
            </td>
            {columns.map(([c]) => <td key={c} className="border-r border-b border-black p-0" />)}
          </tr>
        ))}
      </tbody>
    </table>
  );
}

/* ---------- child window ---------- */

function ModuleAccessRights() {
  const btn = "h-5 w-[66px] text-[10px] font-bold " + raised;
  return (
    <section className="flex min-w-0 flex-1 flex-col rounded-tl-md border-r-[5px] border-b-[5px] border-l-[6px] border-[#bcd4ee] bg-[#f7f7f7]">
      <header className={"-mr-[5px] -ml-[6px] flex h-6 items-center rounded-tl-md bg-linear-to-b from-[#98b3d0] to-[#b7d0ea] pt-[5px] pl-2 text-[10px] text-[#1c1c1c] " + SEGOE}>
        <LeafIcon className="size-[13px]" />
        <h2 className="ml-[3px] flex-1">Module Access Rights</h2>
        <div className="flex gap-0.5 pr-[6px]">
          <button type="button" aria-label="Minimize child" className="grid h-[15px] w-[26px] place-items-center rounded-sm border border-[#56708f] bg-linear-to-b from-[#c9dbee] to-[#9fb9d6]">
            <span className="mt-1 h-1 w-[9px] border border-[#4a5a70] bg-white" />
          </button>
          <button type="button" aria-label="Restore child" className="grid h-[15px] w-[26px] place-items-center rounded-sm border border-[#56708f] bg-linear-to-b from-[#c9dbee] to-[#9fb9d6]">
            <span className="grid h-[7px] w-[9px] place-items-center border border-[#4a5a70] bg-white"><span className="h-[3px] w-1 border border-[#4a5a70]" /></span>
          </button>
          <button type="button" aria-label="Close child" className="grid h-[15px] w-[27px] place-items-center rounded-sm border border-[#6b2a22] bg-linear-to-b from-[#dd8f80] to-[#b9351f]">
            <svg viewBox="0 0 8 8" className="size-2" stroke="#fff" strokeWidth="2"><path d="M1 1l6 6M7 1L1 7" /></svg>
          </button>
        </div>
      </header>

      <div className={"flex flex-1 flex-col pr-[10px] pl-[7px] text-[9px] text-black " + ARIAL}>
        <div className="flex h-[67px] items-start">
          <div className="w-[262px] shrink-0">
            <div className="h-[14px] leading-[14px]">Location</div>
            <Combo label="Location" value="WHITE LILY MEDICAL CENTRE" className="h-[17px] text-[10px]" />
            <div className="flex h-4 items-center">
              <span className="w-[86px]">Search User</span>
              <label className="flex w-[72px] items-center gap-[5px]">
                <input type="radio" name="status" defaultChecked className="size-[9px] appearance-none rounded-full border border-[#8a8a8a] bg-white bg-[radial-gradient(#000_30%,transparent_35%)]" />
                Active Users
              </label>
              <label className="flex items-center gap-[5px]">
                <input type="radio" name="status" className="size-[9px] appearance-none rounded-full border border-[#8a8a8a] bg-white" />
                InActive Users
              </label>
            </div>
            <Combo label="Search User" className="h-[17px]" />
          </div>

          <div className="mt-0.5 ml-[7px] h-[58px] w-[323px] shrink-0 border border-[#a8a8a8] px-[6px] pt-0.5">
            <div className="h-[10px] border-t border-l border-[#a8a8a8]" />
            <div className="mt-[3px] flex items-start">
              <div className="space-y-0.5">
                <label className="flex h-[18px] items-center">
                  <span className="w-[66px] pt-[6px]">From Date</span>
                  <Combo label="From Date" value="01/09/2025" className="h-[18px] w-[97px] text-[11px] font-bold" />
                </label>
                <label className="flex h-[18px] items-center">
                  <span className="w-[66px] pt-[6px]">To Date</span>
                  <Combo label="To Date" value="30/09/2025" className="h-[18px] w-[97px] text-[11px] font-bold" />
                </label>
              </div>
              <button type="button" className={"ml-2 h-5 w-[60px] whitespace-nowrap " + raised}>Show Report</button>
            </div>
          </div>

          <div className="mt-[13px] ml-[14px] flex">
            <button type="button" disabled className={btn + " text-[#9a9a9a]"}><u>S</u>ave</button>
            <button type="button" className={btn + " ml-[6px]"}><u>P</u>rint</button>
            <button type="button" className={btn + " ml-[13px]"}><u>C</u>lose</button>
          </div>
        </div>

        <div className="flex flex-1">
          <div className="w-[362px] shrink-0">
            <UserList />
            <BillingPanel />
            <BottomTabs />
          </div>
          <div className="mb-[7px] flex min-w-0 flex-1 flex-col">
            <div role="tablist" className="flex h-4 items-end pl-[7px]">
              {logTabs.map(([t, w], i) => (
                <button key={t} type="button" role="tab" aria-selected={i === 0} className={"h-[14px] border-r border-[#5f5f5f] pt-px text-center whitespace-nowrap " + w}>{t}</button>
              ))}
            </div>
            <div className="flex flex-1 border-r border-b border-l border-r-[#6d6d6d] border-b-[#5f5f5f] border-l-white pt-[7px] pr-[7px] pb-[3px] pl-[6px]">
              <div className="flex-1 border-t-2 border-r border-b border-l-2 border-t-[#8b8b8b] border-r-[#e3e3e3] border-b-[#e3e3e3] border-l-[#8b8b8b] bg-white">
                <ModulesTable />
              </div>
            </div>
          </div>
        </div>
      </div>
    </section>
  );
}

/* ---------- clinic application ---------- */

const menu: [string, string, string, string][] = [
  ["", "F", "ront Office", "w-[63px]"], ["", "P", "atient Mgt.", "w-[65px]"], ["", "L", "aboratory", "w-[58px]"], ["", "R", "adiology", "w-[55px]"],
  ["", "I", "nsurance", "w-[54px]"], ["In", "v", "entory", "w-[53px]"], ["", "A", "ccounts", "w-[52px]"], ["", "N", "urses", "w-[41px]"],
  ["File ", "S", "torage", "w-[65px]"], ["", "A", "dmin", "w-[41px]"], ["", "W", "indows", "w-[51px]"], ["", "T", "ools", "w-[35px]"],
  ["", "H", "elp", "w-[32px]"], ["", "Q", "uit", "w-[30px]"],
];

function ClinicApp() {
  return (
    <main className="relative mx-[263px] flex flex-1 flex-col border-t border-[#4a4a4a]">
      <div className="flex h-[18px] items-center bg-white font-[Roboto,sans-serif] text-[10px] text-black">
        <LeafIcon className="ml-[3px] size-[11px]" />
        <h1 className="ml-[5px] flex flex-1 whitespace-nowrap">
          <span className="w-[97px]">UniCare Clinic Mgt. -</span>
          <span className="w-[125px]">This PC : VARIANT-SERVER</span>
          <span className="w-[71px]">User : Variant</span>
          <span className="w-[84px]">Facility : MF4076</span>
          <span>Unicare Ver.Dt: 10/09/25 11:18 am</span>
        </h1>
        <Caption className="w-[112px]" />
      </div>
      <nav className={"flex h-[17px] items-center bg-white pl-[6px] text-[10px] text-black " + SEGOE}>
        {menu.map(([a, b, c, w]) => (
          <button key={a + b + c} type="button" className={"text-left whitespace-nowrap " + w}>{a}<u>{b}</u>{c}</button>
        ))}
      </nav>
      <div className="flex h-[27px] items-center bg-black text-white">
        <div className={"flex-1 pl-[7px] font-bold whitespace-nowrap " + ARIAL}>
          <p className="text-[16px] leading-[14px]">WHITE LILY MEDICAL CENTRE</p>
          <p className="text-[9px] leading-[13px]">1st Floor, Bawabat Al Sharq Mall,, ABU DHABI, United Arab Emirates, Phone. : 02 5556388</p>
        </div>
        <div className="flex pr-[3px]">
          {appTools.map(([label, art]) => (
            <button key={label} type="button" aria-label={label} className="grid w-[26px] place-items-center">
              <svg viewBox="0 0 22 22" className="size-[22px]">{art}</svg>
            </button>
          ))}
        </div>
      </div>
      <div className="flex flex-1 border-t-[3px] border-r-2 border-b-2 border-l-2 border-t-[#707070] border-r-[#f2f6fa] border-b-[#e9e9e9] border-l-[#808080]">
        <div className="flex flex-1 border-b border-[#137c8c] bg-[repeating-linear-gradient(to_bottom,#10b7f5_0_22px,#063c52_22px_28px)] pl-0.5">
          <ModuleAccessRights />
        </div>
      </div>
      <SideFlag className="top-[539px] h-[55px] w-[22px]" fill="#f7f7f7" />
    </main>
  );
}

/* ---------- taskbars ---------- */

const innerTasks: [string, React.ReactNode, boolean][] = [
  ["Start", <WinLogo key="i" className="size-[14px]" />, false],
  ["Search", <Lens key="i" className="size-[14px]" />, false],
  ["Task View", <TaskView key="i" className="size-[14px]" />, false],
  ["Internet Explorer", <IeIcon key="i" />, false],
  ["File Explorer", <FolderIcon key="i" className="size-5" />, true],
  ["Chrome", <ChromeIcon key="i" className="size-5" />, false],
  ["SQL Studio", <SqlIcon key="i" />, true],
  ["Excel", <ExcelIcon key="i" />, true],
  ["Notepad", <NotepadIcon key="i" />, true],
  ["UltraViewer", <UltraIcon key="i" className="size-5" />, true],
  ["Command Prompt", <CmdIcon key="i" />, true],
  ["AnyDesk", <AnyDeskIcon key="i" />, true],
  ["UniCare", <LeafIcon key="i" className="size-5" />, true],
];

function InnerTaskbar() {
  return (
    <div className="mx-[263px] flex h-[34px] items-stretch bg-black text-white">
      <div className="flex w-[524px] justify-between">
        {innerTasks.map(([label, icon, open]) => (
          <button key={label} type="button" aria-label={label} className={"flex h-[33px] w-10 flex-col items-center " + (label === "UniCare" ? "bg-[#3a3a3a]" : "")}>
            <span className="grid flex-1 place-items-center">{icon}</span>
            {open && <span className={"h-0.5 bg-[#9ed2f2] " + (label === "UniCare" ? "w-10" : "w-[33px]")} />}
          </button>
        ))}
      </div>
      <div className={"ml-auto flex items-center pr-[3px] text-center text-[9px] leading-[15px] " + SEGOE}>
        <TrayUp className="w-[10px]" />
        <TrayNet className="ml-2 size-[14px]" />
        <span className="ml-[6px] flex items-center"><TrayKey /></span>
        <TraySpeaker className="ml-[5px] size-[14px]" muted />
        <span className="w-16">8:48 AM<br />15/09/2025</span>
        <TrayNote className="ml-[6px] size-[14px]" />
        <span className="ml-4 h-full w-px bg-[#4f4f4f]" />
      </div>
    </div>
  );
}

const midTasks: [string, React.ReactNode][] = [
  ["Task View", <TaskSquares key="i" />],
  ["File Explorer", <FolderIcon key="i" className="size-[25px]" />],
  ["Edge", <EdgeIcon key="i" />],
  ["Store", <StoreIcon key="i" />],
  ["MyAsus", <MIcon key="i" />],
  ["McAfee", <McAfeeIcon key="i" />],
  ["GitHub", <GithubIcon key="i" />],
  ["Chrome", <ChromeIcon key="i" />],
  ["Teams", <TeamsIcon key="i" />],
  ["UltraViewer", <UltraIcon key="i" />],
  ["Settings", <SettingsIcon key="i" />],
];

function MiddleTaskbar() {
  return (
    <footer className={"flex h-[49px] items-center border-t border-[#3b3b3b] bg-[#202020] text-[12px] leading-4 text-white " + SEGOE}>
      <div className="flex w-[413px] shrink-0 items-center pl-5">
        <div className="relative">
          <Umbrella />
          <span className="absolute -top-[9px] left-3 grid size-4 place-items-center rounded-full bg-[#ff99a4] text-[11px] text-[#333]">5</span>
        </div>
        <div className="ml-2 pb-0.5">
          <p>Rainy days ahead</p>
          <p className="text-[11px] text-[#c4c4c4]">27°C</p>
        </div>
      </div>
      <button type="button" aria-label="Start"><Win11Logo /></button>
      <label className="ml-[14px] flex h-[33px] w-[226px] items-center rounded-full border border-[#4a4a4a] bg-[#3a3a3a] pl-3">
        <svg viewBox="0 0 16 16" className="size-[15px]" fill="none" stroke="#fff" strokeWidth="1.500" aria-hidden="true"><circle cx="6.500" cy="6.500" r="5.500" /><path d="M10.500 10.500l5 5" /></svg>
        <input type="text" aria-label="Search" placeholder="Search" className="ml-[10px] min-w-0 flex-1 bg-transparent text-[13px] text-white outline-none placeholder:text-[#d0d0d0]" />
      </label>
      <div className="ml-[3px] flex">
        {midTasks.map(([label, icon]) => (
          <button key={label} type="button" aria-label={label} className={"relative grid h-[42px] w-[45px] place-items-center " + (label === "UltraViewer" ? "rounded-sm border border-[#383838] bg-[#2b2b2b]" : "")}>
            {icon}
            {label === "UltraViewer" && <span className="absolute bottom-0 h-[3px] w-4 rounded-full bg-[#ff8a65]" />}
            {(label === "Teams" || label === "Settings") && <span className="absolute bottom-0 h-[3px] w-[6px] rounded-full bg-[#9b9b9b]" />}
          </button>
        ))}
      </div>
      <div className="ml-auto flex items-center pb-0.5">
        <TrayUp />
        <svg viewBox="0 0 20 16" className="ml-5 h-4 w-5" aria-hidden="true"><path d="M4 12a4 4 0 0 1 1-8 5 5 0 0 1 9 1v7z" fill="#b9b9b9" /><circle cx="13" cy="10.500" r="5" fill="#d31f2c" /><path d="M11 8.500l4 4M15 8.500l-4 4" stroke="#fff" strokeWidth="1.400" /></svg>
        <svg viewBox="0 0 16 16" className="ml-[14px] size-4" fill="none" stroke="#e5a78c" strokeWidth="1.400" aria-hidden="true"><path d="M15 1L1 9l5 1 4 5z" /></svg>
        <p className="ml-4 w-[34px] text-center leading-[17px]">ENG<br />IN</p>
        <svg viewBox="0 0 18 14" className="ml-[13px] h-[13px] w-[17px]" fill="none" stroke="#fff" strokeWidth="1.400" aria-hidden="true"><path d="M1 5a11.500 11.500 0 0 1 16 0M3.500 8a8 8 0 0 1 11 0M6 10.500a4.500 4.500 0 0 1 6 0" /><circle cx="9" cy="12.500" r="1.200" fill="#fff" stroke="none" /></svg>
        <TraySpeaker className="ml-[7px] size-[17px]" />
        <svg viewBox="0 0 18 12" className="ml-[7px] h-[11px] w-[17px]" fill="none" stroke="#fff" strokeWidth="1.200" aria-hidden="true"><rect x="1" y="1" width="14" height="10" rx="2" /><rect x="3" y="3" width="9" height="6" fill="#fff" /><path d="M17 4v4" /></svg>
        <p className="ml-[17px] text-right leading-[17px]">10:18 AM<br />9/15/2025</p>
        <svg viewBox="0 0 16 18" className="mr-[21px] ml-2 h-[17px] w-[15px]" aria-hidden="true"><path d="M1 14c1-1 1.500-2 1.500-6C2.500 4 5 2 8 2l4 0v6l2 0c0 4 .5 5 1.500 6zM5.500 15h5a2.500 2.500 0 0 1-5 0z" fill="#fff" /><path d="M11 1h4l-4 4h4" stroke="#fff" fill="none" strokeWidth="1.200" /><path d="M5.500 6H9L5.500 10.500H9" stroke="#222" fill="none" strokeWidth="1.200" /></svg>
      </div>
    </footer>
  );
}

const ProfileEdge = () => (
  <span className="relative"><EdgeIcon /><span className="absolute bottom-0 left-0 size-[11px] rounded-full border-2 border-[#8b8b8b] bg-[#d5d5d5]" /></span>
);
const ProfileChrome = () => (
  <span className="relative"><ChromeIcon /><span className="absolute top-[10px] left-[11px] grid size-[15px] place-items-center rounded-full bg-[#7a55c2] text-[9px] leading-none text-white">r</span></span>
);

const outerTasks: [string, React.ReactNode, boolean][] = [
  ["Task View", <TaskView key="i" className="size-[15px]" />, false],
  ["Edge", <ProfileEdge key="i" />, false],
  ["File Explorer", <FolderIcon key="i" />, false],
  ["Store", <StoreIcon key="i" />, false],
  ["Outlook", <OutlookIcon key="i" />, false],
  ["Chrome", <ProfileChrome key="i" />, true],
  ["Brave", <BraveIcon key="i" />, true],
  ["WhatsApp", <WhatsappIcon key="i" />, false],
  ["GitHub", <GithubIcon key="i" />, true],
  ["Firefox", <FirefoxIcon key="i" />, false],
  ["Recorder", <PurpleIcon key="i" />, true],
  ["VS Code", <VsCodeIcon key="i" />, true],
  ["Brave window", <BraveIcon key="i" />, true],
  ["UltraViewer", <UltraIcon key="i" />, true],
];

function OuterTaskbar() {
  return (
    <footer className={"flex h-10 items-stretch bg-linear-to-r from-[#21363f] via-[#1f3442] to-[#1b2747] text-white " + SEGOE}>
      <button type="button" aria-label="Start" className="grid w-12 place-items-center"><WinLogo /></button>
      <label className="flex w-72 items-center border border-[#c4c4c4] bg-[#f2f2f2] pl-[11px]">
        <Lens className="size-[17px]" color="#222" />
        <input type="text" aria-label="Type here to search" placeholder="Type here to search" className="ml-[11px] min-w-0 flex-1 bg-transparent text-[14px] text-black outline-none placeholder:text-[#333]" />
      </label>
      <div className="flex">
        {outerTasks.map(([label, icon, open]) => (
          <button key={label} type="button" aria-label={label} className={"flex w-[49px] flex-col items-center " + (label === "UltraViewer" ? "bg-[#4d5d6c]" : "")}>
            <span className="grid flex-1 place-items-center">{icon}</span>
            <span className={"h-0.5 " + (open ? "bg-[#76b9ed] " : "") + (label === "UltraViewer" ? "w-full" : "w-10")} />
          </button>
        ))}
      </div>
      <div className="ml-auto flex items-center text-center text-[11px] leading-[18px]">
        <TrayUp />
        <TrayNet className="ml-[10px] size-4" />
        <TraySpeaker className="ml-[9px] size-4" />
        <span className="ml-[9px] w-[60px]">10:15<br />15-09-2025</span>
        <TrayNote className="ml-[17px] size-4" filled />
        <span className="mr-1 ml-5 h-full w-px bg-[#6e7891]" />
      </div>
    </footer>
  );
}

/* ---------- page ---------- */

export default function App() {
  return (
    <div className="relative flex min-h-screen flex-col bg-black">
      <header className={"flex h-[23px] items-center bg-white pl-0.5 text-[11px] text-black " + SEGOE}>
        <UltraIcon className="size-4" />
        <span className="ml-1 flex-1">SHRINIKA (100045911) - UltraViewer</span>
        <Caption className="w-[138px]" />
      </header>
      <div className="relative mr-[51px] ml-[50px] flex flex-1 flex-col">
        <header className={"flex h-6 items-center bg-[#eff7ff] pl-0.5 text-[12px] text-black " + SEGOE}>
          <UltraIcon className="size-4" />
          <span className="ml-[6px] flex-1">VARIANT-SERVER (75189632) - UltraViewer</span>
          <Caption className="w-[146px]" />
        </header>
        <div className="relative flex flex-1 flex-col pt-[60px] pb-[10px]">
          <ClinicApp />
          <InnerTaskbar />
          <div className={"absolute right-0 bottom-0 w-[258px] text-[#7b7b7b] " + SEGOE}>
            <p className="text-[19px] leading-6">Activate Windows</p>
            <p className="text-[14px] leading-5">Go to Settings to activate Windows.</p>
          </div>
        </div>
        <MiddleTaskbar />
        <SideFlag className="top-[650px] h-[68px] w-[26px]" fill="#f7f7f7" />
      </div>
      <OuterTaskbar />
      <SideFlag className="top-[682px] h-[67px] w-[26px]" fill="#efefef" />
      <FloatingToolbars />
    </div>
  );
}
